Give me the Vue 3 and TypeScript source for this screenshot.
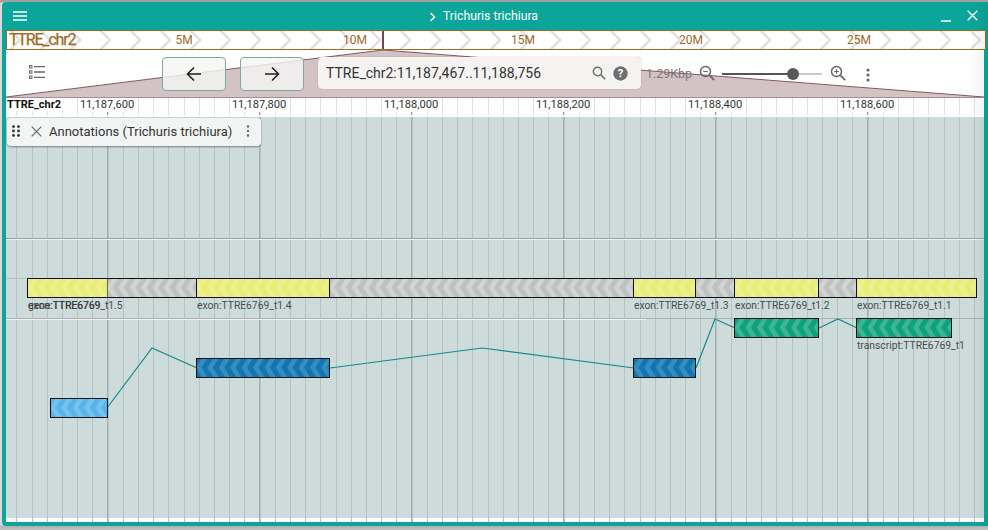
<script setup lang="ts">
const W = 978
const minorTicks: number[] = []
for (let i = -6; i < 59; i++) minorTicks.push(Math.round(101.5 + i * 15.2) + 0.5)
const majors = [101.5, 253.5, 405.5, 557.5, 709.5, 861.5]
const rulerLabels = [
  { x: 101, t: '11,187,600' },
  { x: 253, t: '11,187,800' },
  { x: 405, t: '11,188,000' },
  { x: 557, t: '11,188,200' },
  { x: 709, t: '11,188,400' },
  { x: 861, t: '11,188,600' },
]
const overviewLabels = [
  { x: 177, t: '5M' },
  { x: 348, t: '10M' },
  { x: 516, t: '15M' },
  { x: 684, t: '20M' },
  { x: 852, t: '25M' },
]
const chevrons: number[] = []
for (let x = 3; x < 990; x += 30) chevrons.push(x)

const boxes = [
  { x: 27, y: 278, w: 80, h: 19, f: 'yellow' },
  { x: 107, y: 278, w: 89, h: 19, f: 'grey' },
  { x: 329, y: 278, w: 304, h: 19, f: 'grey' },
  { x: 695, y: 278, w: 39, h: 19, f: 'grey' },
  { x: 818, y: 278, w: 38, h: 19, f: 'grey' },
  { x: 196, y: 278, w: 133, h: 19, f: 'yellow' },
  { x: 633, y: 278, w: 62, h: 19, f: 'yellow' },
  { x: 734, y: 278, w: 84, h: 19, f: 'yellow' },
  { x: 856, y: 278, w: 120, h: 19, f: 'yellow' },
  { x: 50, y: 398, w: 57, h: 19, f: 'sky' },
  { x: 196, y: 358, w: 133, h: 19, f: 'blue' },
  { x: 633, y: 358, w: 62, h: 19, f: 'blue' },
  { x: 734, y: 318, w: 84, h: 19, f: 'green' },
  { x: 856, y: 318, w: 95, h: 19, f: 'green' },
].map(b => ({ ...b, x: b.x - 6, y: b.y - 117 }))

const fills: Record<string, string> = {
  yellow: '#e8ed78',
  grey: '#bfc1c1',
  sky: '#56b4ea',
  blue: '#0f76b2',
  green: '#0ea27a',
}
const chevColors: Record<string, string> = {
  yellow: 'rgba(255,255,255,0.16)',
  grey: 'rgba(255,255,255,0.3)',
  sky: 'rgba(255,255,255,0.2)',
  blue: 'rgba(255,255,255,0.17)',
  green: 'rgba(255,255,255,0.2)',
}
const labels = [
  { x: 28, y: 309, t: 'gene:TTRE6769' },
  { x: 28, y: 309, t: 'exon:TTRE6769_t1.5' },
  { x: 197, y: 309, t: 'exon:TTRE6769_t1.4' },
  { x: 634, y: 309, t: 'exon:TTRE6769_t1.3' },
  { x: 735, y: 309, t: 'exon:TTRE6769_t1.2' },
  { x: 857, y: 309, t: 'exon:TTRE6769_t1.1' },
  { x: 857, y: 349, t: 'transcript:TTRE6769_t1' },
].map(l => ({ ...l, x: l.x - 6, y: l.y - 117 }))
const lines = [
  '107,408 152,348 197,368',
  '330,368 482,348 634,368',
  '696,368 715,319 735,328',
  '819,328 838,319 857,328',
]
const shift = (p: string) =>
  p.split(' ').map(c => {
    const [x, y] = c.split(',').map(Number)
    return `${x - 6},${y - 117}`
  }).join(' ')
const linePoints = lines.map(shift)
</script>

<template>
  <div class="page">
    <div class="window">
      <header class="titlebar">
        <svg class="menu" width="14" height="10" viewBox="0 0 14 10"><path d="M0 1h14M0 5h14M0 9h14" stroke="#fff" stroke-width="1.3" /></svg>
        <div class="title">
          <svg width="8" height="10" viewBox="0 0 8 10"><path d="M2.5 1l4 4-4 4" fill="none" stroke="#fff" stroke-width="1.4" /></svg>
          <span>Trichuris trichiura</span>
        </div>
        <div class="winbtns">
          <svg width="10" height="12" viewBox="0 0 10 12"><path d="M0 11h10" stroke="#fff" stroke-width="1.6" /></svg>
          <svg width="11" height="11" viewBox="0 0 11 11"><path d="M0.7 0.7l9.6 9.6M10.3 0.7L0.7 10.3" stroke="#fff" stroke-width="1.4" /></svg>
        </div>
      </header>

      <div class="body">
        <div class="overview">
          <svg class="chevs" width="980" height="18">
            <path v-for="x in chevrons" :key="x" :d="`M${x} -1l10 10-10 10`" fill="none" stroke="#e0e0e0" stroke-width="2.4" />
          </svg>
          <span class="ov-name">TTRE_chr2</span>
          <span v-for="l in overviewLabels" :key="l.t" class="ov-label" :style="{ left: l.x + 'px' }">{{ l.t }}</span>
          <span class="ov-marker"></span>
        </div>

        <div class="toolbar">
          <svg class="zoomshape" width="978" height="48" viewBox="0 0 978 48">
            <polygon points="377,0 0,47 978,47" fill="#d4c3c5" />
            <path d="M0 47L377 0L978 47" fill="none" stroke="#86585c" stroke-width="1" />
            <path d="M0 47.5H978" stroke="#a78c90" stroke-width="1" />
          </svg>
          <button class="listbtn" type="button" aria-label="tracks">
            <svg width="16" height="14" viewBox="0 0 16 14">
              <g fill="none" stroke="#666" stroke-width="1">
                <rect x="0.5" y="0.5" width="2.4" height="2.4" /><rect x="0.5" y="5.8" width="2.4" height="2.4" /><rect x="0.5" y="11.1" width="2.4" height="2.4" />
              </g>
              <path d="M5 1.7h11M5 7h11M5 12.3h11" stroke="#666" stroke-width="1.3" />
            </svg>
          </button>
          <button class="nav" type="button" aria-label="back">
            <svg width="16" height="16" viewBox="0 0 16 16"><path d="M15 8H2M8 1.5L1.5 8 8 14.5" fill="none" stroke="#222" stroke-width="1.6" /></svg>
          </button>
          <button class="nav" type="button" aria-label="forward">
            <svg width="16" height="16" viewBox="0 0 16 16"><path d="M1 8h13M8 1.5L14.5 8 8 14.5" fill="none" stroke="#222" stroke-width="1.6" /></svg>
          </button>
          <div class="search">
            <span class="loc">TTRE_chr2:11,187,467..11,188,756</span>
            <svg width="14" height="14" viewBox="0 0 14 14"><circle cx="5.5" cy="5.5" r="4.2" fill="none" stroke="#6f6f6f" stroke-width="1.4" /><path d="M8.6 8.6l4.6 4.6" stroke="#6f6f6f" stroke-width="1.6" /></svg>
            <svg width="15" height="15" viewBox="0 0 15 15"><circle cx="7.5" cy="7.5" r="7.2" fill="#6f6f6f" /><text x="7.5" y="11.4" text-anchor="middle" class="qmark">?</text></svg>
          </div>
          <span class="kbp">1.29Kbp</span>
          <svg class="zoomicon first" width="16" height="16" viewBox="0 0 16 16"><circle cx="6.5" cy="6.5" r="5" fill="none" stroke="#666" stroke-width="1.5" /><path d="M10.2 10.2l5 5" stroke="#666" stroke-width="1.8" /><path d="M4.2 6.5h4.6" stroke="#666" stroke-width="1.2" /></svg>
          <div class="slider"><span class="fill"></span><span class="thumb"></span></div>
          <svg class="zoomicon" width="16" height="16" viewBox="0 0 16 16"><circle cx="6.5" cy="6.5" r="5" fill="none" stroke="#666" stroke-width="1.5" /><path d="M10.2 10.2l5 5" stroke="#666" stroke-width="1.8" /><path d="M4.2 6.5h4.6M6.5 4.2v4.6" stroke="#666" stroke-width="1.2" /></svg>
          <svg class="dots" width="4" height="14" viewBox="0 0 4 14"><circle cx="2" cy="2" r="1.6" fill="#666" /><circle cx="2" cy="7" r="1.6" fill="#666" /><circle cx="2" cy="12" r="1.6" fill="#666" /></svg>
        </div>

        <div class="ruler">
          <svg width="978" height="17" class="ruler-svg">
            <line v-for="x in minorTicks" :key="x" :x1="x" :x2="x" y1="0" y2="17" stroke="#e2e2e2" />
            <line v-for="x in majors" :key="x" :x1="x" :x2="x" y1="13" y2="17" stroke="#999" />
          </svg>
          <span class="ruler-name">TTRE_chr2</span>
          <span v-for="l in rulerLabels" :key="l.t" class="ruler-label" :style="{ left: l.x + 'px' }">{{ l.t }}</span>
        </div>

        <div class="tracks">
          <svg :width="W" height="405" class="track-svg">
            <defs>
              <pattern v-for="(c, k) in chevColors" :id="`chev-${k}`" :key="k" width="11.4" height="19" patternUnits="userSpaceOnUse">
                <path d="M6 0L0 9.5l6 9.5h5.4L5.4 9.5l6-9.5z" :fill="c" />
              </pattern>
            </defs>
            <rect x="0" y="401" width="978" height="4" fill="#fff" />
            <line v-for="x in minorTicks" :key="x" :x1="x" :x2="x" y1="0" y2="405" stroke="#b5c4c3" />
            <line v-for="x in majors" :key="x" :x1="x" :x2="x" y1="0" y2="405" stroke="#a3b1b0" />

            <path d="M0 121.5H978" stroke="#9a9f9f" />
            <path d="M0 122.5H978" stroke="#eef2f2" />
            <path d="M0 161.5H21" stroke="#b5c4c3" />
            <path d="M0 201.5H978" stroke="#a9b1b1" />
            <path d="M0 202.5H640" stroke="#eef2f2" />

            <polyline v-for="p in linePoints" :key="p" :points="p" fill="none" stroke="#138b8b" stroke-width="1.2" />

            <g v-for="b in boxes" :key="`${b.x}-${b.y}`" :transform="`translate(${b.x} ${b.y})`">
              <rect x="0.5" y="0.5" :width="b.w" :height="b.h" :fill="fills[b.f]" :stroke="b.f === 'grey' ? 'none' : '#111'" />
              <rect x="1" y="1" :width="b.w - 1" :height="b.h - 1" :fill="`url(#chev-${b.f})`" />
              <path v-if="b.f === 'grey'" :d="`M0 0.5h${b.w}M0 ${b.h + 0.5}h${b.w}`" stroke="#111" />
            </g>

            <text v-for="l in labels" :key="l.t" :x="l.x" :y="l.y" class="flabel">{{ l.t }}</text>
          </svg>

          <div class="track-label">
            <svg width="8" height="12" viewBox="0 0 8 12"><g fill="#333"><circle cx="1.5" cy="1.6" r="1.4" /><circle cx="6.5" cy="1.6" r="1.4" /><circle cx="1.5" cy="6" r="1.4" /><circle cx="6.5" cy="6" r="1.4" /><circle cx="1.5" cy="10.4" r="1.4" /><circle cx="6.5" cy="10.4" r="1.4" /></g></svg>
            <svg class="tl-x" width="11" height="11" viewBox="0 0 11 11"><path d="M0.7 0.7l9.6 9.6M10.3 0.7L0.7 10.3" stroke="#666" stroke-width="1.2" /></svg>
            <span class="tl-text">Annotations (Trichuris trichiura)</span>
            <svg class="tl-dots" width="4" height="12" viewBox="0 0 4 12"><circle cx="2" cy="1.5" r="1.2" fill="#666" /><circle cx="2" cy="6" r="1.2" fill="#666" /><circle cx="2" cy="10.5" r="1.2" fill="#666" /></svg>
          </div>
        </div>
      </div>
      <div class="shade"></div>
    </div>
  </div>
</template>

<style>
html, body { margin: 0; padding: 0; overflow: hidden; background: #fff; }
</style>

<style scoped>
.page {
  width: 988px;
  height: 530px;
  overflow: hidden;
  padding: 2px 0 0 2px;
  box-sizing: border-box;
  background: linear-gradient(180deg, #9c9c9c 0, #a5a5a5 2px, transparent 3px), linear-gradient(0deg, #c4c4c4 0, #b0b0b0 4px, transparent 5px), linear-gradient(90deg, #d9d9d9, #eee);
  font-family: Roboto, "Liberation Sans", sans-serif;
}
.window {
  position: relative;
  width: 990px;
  height: 524px;
  background: #0ba699;
  border-radius: 4px;
  display: flex;
  flex-direction: column;
  overflow: hidden;
}
.titlebar {
  height: 28px;
  flex: none;
  display: flex;
  align-items: center;
  position: relative;
  color: #fff;
}
.menu { position: absolute; left: 11px; top: 9px; }
.title {
  position: absolute;
  left: 426px;
  top: 7px;
  display: flex;
  align-items: center;
  gap: 7px;
  font-size: 12.25px;
  line-height: 15px;
}
.winbtns {
  position: absolute;
  left: 939px;
  top: 8px;
  display: flex;
  gap: 16px;
  align-items: flex-start;
}
.body {
  margin-left: 4px;
  width: 980px;
  display: flex;
  flex-direction: column;
}
.overview {
  position: relative;
  height: 20px;
  box-sizing: border-box;
  border: 1px solid #a1691e;
  background: #fff;
  overflow: hidden;
}
.chevs { position: absolute; left: 0; top: 0; }
.ov-name {
  position: absolute;
  left: 2px;
  top: 0;
  font-size: 16px;
  line-height: 18px;
  letter-spacing: -1.2px;
  color: #a1691e;
  -webkit-text-stroke: 0.25px #a1691e;
}
.ov-label {
  position: absolute;
  top: 0;
  font-size: 12px;
  line-height: 18px;
  color: #a1691e;
  transform: translateX(-50%);
}
.ov-marker {
  position: absolute;
  left: 375px;
  top: -1px;
  width: 2px;
  height: 20px;
  background: #84404a;
}
.toolbar {
  position: relative;
  height: 48px;
  width: 978px;
  background: #fff;
  display: flex;
  align-items: flex-start;
}
.zoomshape { position: absolute; left: 0; top: 0; }
.listbtn {
  position: relative;
  margin: 15px 0 0 23px;
  padding: 0;
  width: 16px;
  height: 14px;
  border: 0;
  background: none;
  display: flex;
}
.nav {
  position: relative;
  width: 64px;
  height: 34px;
  margin-top: 7px;
  padding: 0;
  border: 1px solid #7ba8a6;
  border-radius: 4px;
  background: rgba(245, 245, 244, 0.82);
  display: flex;
  align-items: center;
  justify-content: center;
}
.listbtn + .nav { margin-left: 117px; }
.nav + .nav { margin-left: 14px; }
.search {
  position: relative;
  margin: 7px 0 0 14px;
  width: 323px;
  height: 32px;
  box-sizing: border-box;
  border-radius: 4px;
  background: #f4f3f2;
  box-shadow: 0 0 1px 0 rgba(0, 0, 0, 0.45);
  display: flex;
  align-items: center;
  padding: 0 13px 0 8px;
  gap: 7px;
}
.loc { flex: 1; font-size: 14px; color: #333; white-space: nowrap; }
.qmark { font: 700 11px Roboto, sans-serif; fill: #fff; }
.kbp {
  position: relative;
  margin: 16px 0 0 5px;
  font-size: 12.4px;
  line-height: 15px;
  color: #777;
  width: 53px;
  white-space: nowrap;
}
.zoomicon { position: relative; margin-top: 15px; }
.slider {
  position: relative;
  margin: 23px 8px 0 7px;
  width: 100px;
  height: 2px;
  background: #c9c9c9;
}
.slider .fill { position: absolute; left: 0; top: 0; height: 2px; width: 71px; background: #555; }
.slider .thumb { position: absolute; left: 65px; top: -5px; width: 12px; height: 12px; border-radius: 50%; background: #595959; }
.dots { position: relative; margin: 18px 0 0 20px; }
.ruler {
  position: relative;
  height: 19px;
  width: 978px;
  background: #fff;
}
.ruler-svg { position: absolute; left: 0; top: 0; }
.ruler-name {
  position: absolute;
  left: 1px;
  top: 0;
  font-size: 11px;
  font-weight: 700;
  line-height: 13px;
  color: #111;
  background: #fff;
  padding-right: 2px;
}
.ruler-label {
  position: absolute;
  top: 0;
  transform: translateX(-50%);
  font-size: 11.1px;
  line-height: 14px;
  color: #333;
  background: #fff;
  padding: 0 1px;
  white-space: nowrap;
}
.tracks {
  position: relative;
  width: 978px;
  height: 405px;
  background: #cddbda;
}
.track-svg { position: absolute; left: 0; top: 0; display: block; }
.flabel { font: 10.3px Roboto, sans-serif; fill: #333; opacity: 0.85; }
.track-label {
  position: absolute;
  left: 1px;
  top: 1px;
  width: 254px;
  height: 28px;
  box-sizing: border-box;
  background: #f3f5f5;
  border-radius: 4px;
  box-shadow: 0 1px 2px rgba(0, 0, 0, 0.4);
  display: flex;
  align-items: center;
  padding: 0 11px 2px 5px;
}
.tl-x { margin-left: 11px; }
.tl-text { margin-left: 7px; flex: 1; font-size: 13px; color: #333; white-space: nowrap; }
.shade {
  position: absolute;
  right: 0;
  top: 0;
  bottom: 0;
  width: 22px;
  background: linear-gradient(90deg, rgba(0, 0, 0, 0), rgba(0, 0, 0, 0.07));
  pointer-events: none;
}
</style>
